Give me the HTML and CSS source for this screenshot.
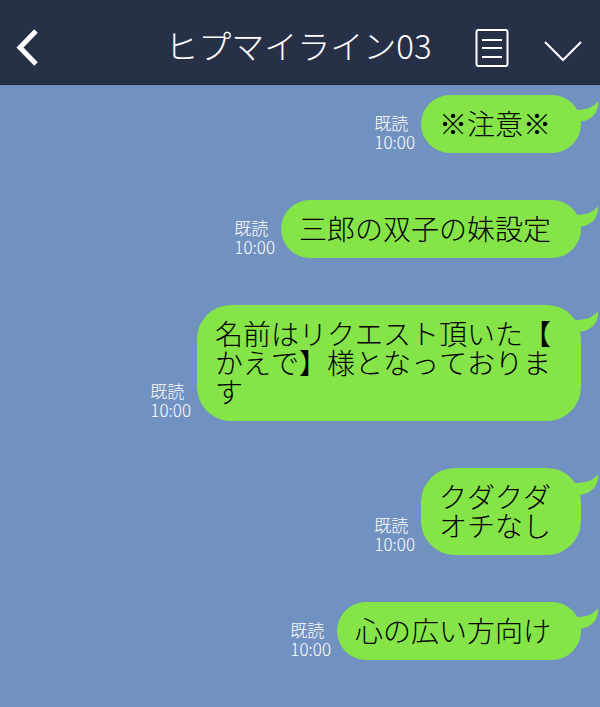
FILE: index.html
```html
<!DOCTYPE html>
<html lang="ja">
<head>
    <meta charset="utf-8">
    <meta name="viewport" content="width=device-width, initial-scale=1">
    <title>ヒプマイライン03</title>
    <link rel="stylesheet" href="styles.css">
</head>
<body>

<svg class="template">
    <symbol id="tail" viewBox="0 0 24 24">
        <path d="M0 9C10 9 18 7 23 0C24 12 16 20 4 21Z"/>
    </symbol>
</svg>

<header class="header">
    <button class="icon-button" type="button" aria-label="戻る">
        <svg width="24" height="38" viewBox="0 0 24 38"><path d="M21 2L5 18.500L21 35" fill="none" stroke="#fff" stroke-width="5"/></svg>
    </button>
    <h1 class="title">ヒプマイライン03</h1>
    <div class="actions">
        <button class="icon-button" type="button" aria-label="ノート">
            <svg width="34" height="38" viewBox="0 0 34 38" fill="none" stroke="#fff" stroke-width="2"><rect x="1.500" y="1" width="31" height="36" rx="2"/><path d="M7 11H27M7 19H27M7 28H27"/></svg>
        </button>
        <button class="icon-button" type="button" aria-label="メニュー">
            <svg width="38" height="38" viewBox="0 0 38 38"><path d="M1 13L19 31L37 13" fill="none" stroke="#fff" stroke-width="2"/></svg>
        </button>
    </div>
</header>

<main class="talk">
    <div class="message">
        <div class="meta">既読<br><time>10:00</time></div>
        <div class="bubble">※注意※<svg class="tail"><use href="#tail"/></svg></div>
    </div>

    <div class="message">
        <div class="meta">既読<br><time>10:00</time></div>
        <div class="bubble">三郎の双子の妹設定<svg class="tail"><use href="#tail"/></svg></div>
    </div>

    <div class="message">
        <div class="meta">既読<br><time>10:00</time></div>
        <div class="bubble">名前はリクエスト頂いた【<br>かえで】様となっておりま<br>す<svg class="tail"><use href="#tail"/></svg></div>
    </div>

    <div class="message">
        <div class="meta">既読<br><time>10:00</time></div>
        <div class="bubble">クダクダ<br>オチなし<svg class="tail"><use href="#tail"/></svg></div>
    </div>

    <div class="message">
        <div class="meta">既読<br><time>10:00</time></div>
        <div class="bubble">心の広い方向け<svg class="tail"><use href="#tail"/></svg></div>
    </div>
</main>

</body>
</html>
```
FILE: styles.css
```css
body { margin: 0; background: #7191c0; font-family: "Noto Sans CJK JP", sans-serif; font-weight: 300; font-kerning: none; }
.template { display: none; }

.header { display: grid; grid-template-columns: 1fr auto 1fr; align-items: center; height: 85px; padding: 12px 18px 0 15px; box-sizing: border-box; background: #263148; border-bottom: 1px solid #1c2740; }
.title { margin: 0; padding-bottom: 6px; color: #fff; font-size: 33px; font-weight: 300; line-height: 36px; white-space: nowrap; }
.actions { display: flex; justify-content: flex-end; gap: 35px; }
.icon-button { justify-self: start; padding: 0; border: none; background: none; cursor: pointer; }
.icon-button svg { display: block; }

.talk { display: flex; flex-direction: column; gap: 47px; padding: 10px 19px 47px 19px; }
.message { display: flex; justify-content: flex-end; align-items: flex-end; gap: 6px; }
.meta { flex: none; padding-bottom: 2px; color: #fff; font-size: 17px; line-height: 19px; }
.bubble { position: relative; padding: 14px 30px 15px 18px; border-radius: 34px; background: #84e448; color: #000; font-size: 28px; line-height: 29px; }
.tail { position: absolute; top: 6px; right: -18px; width: 24px; height: 24px; fill: #84e448; }
```
